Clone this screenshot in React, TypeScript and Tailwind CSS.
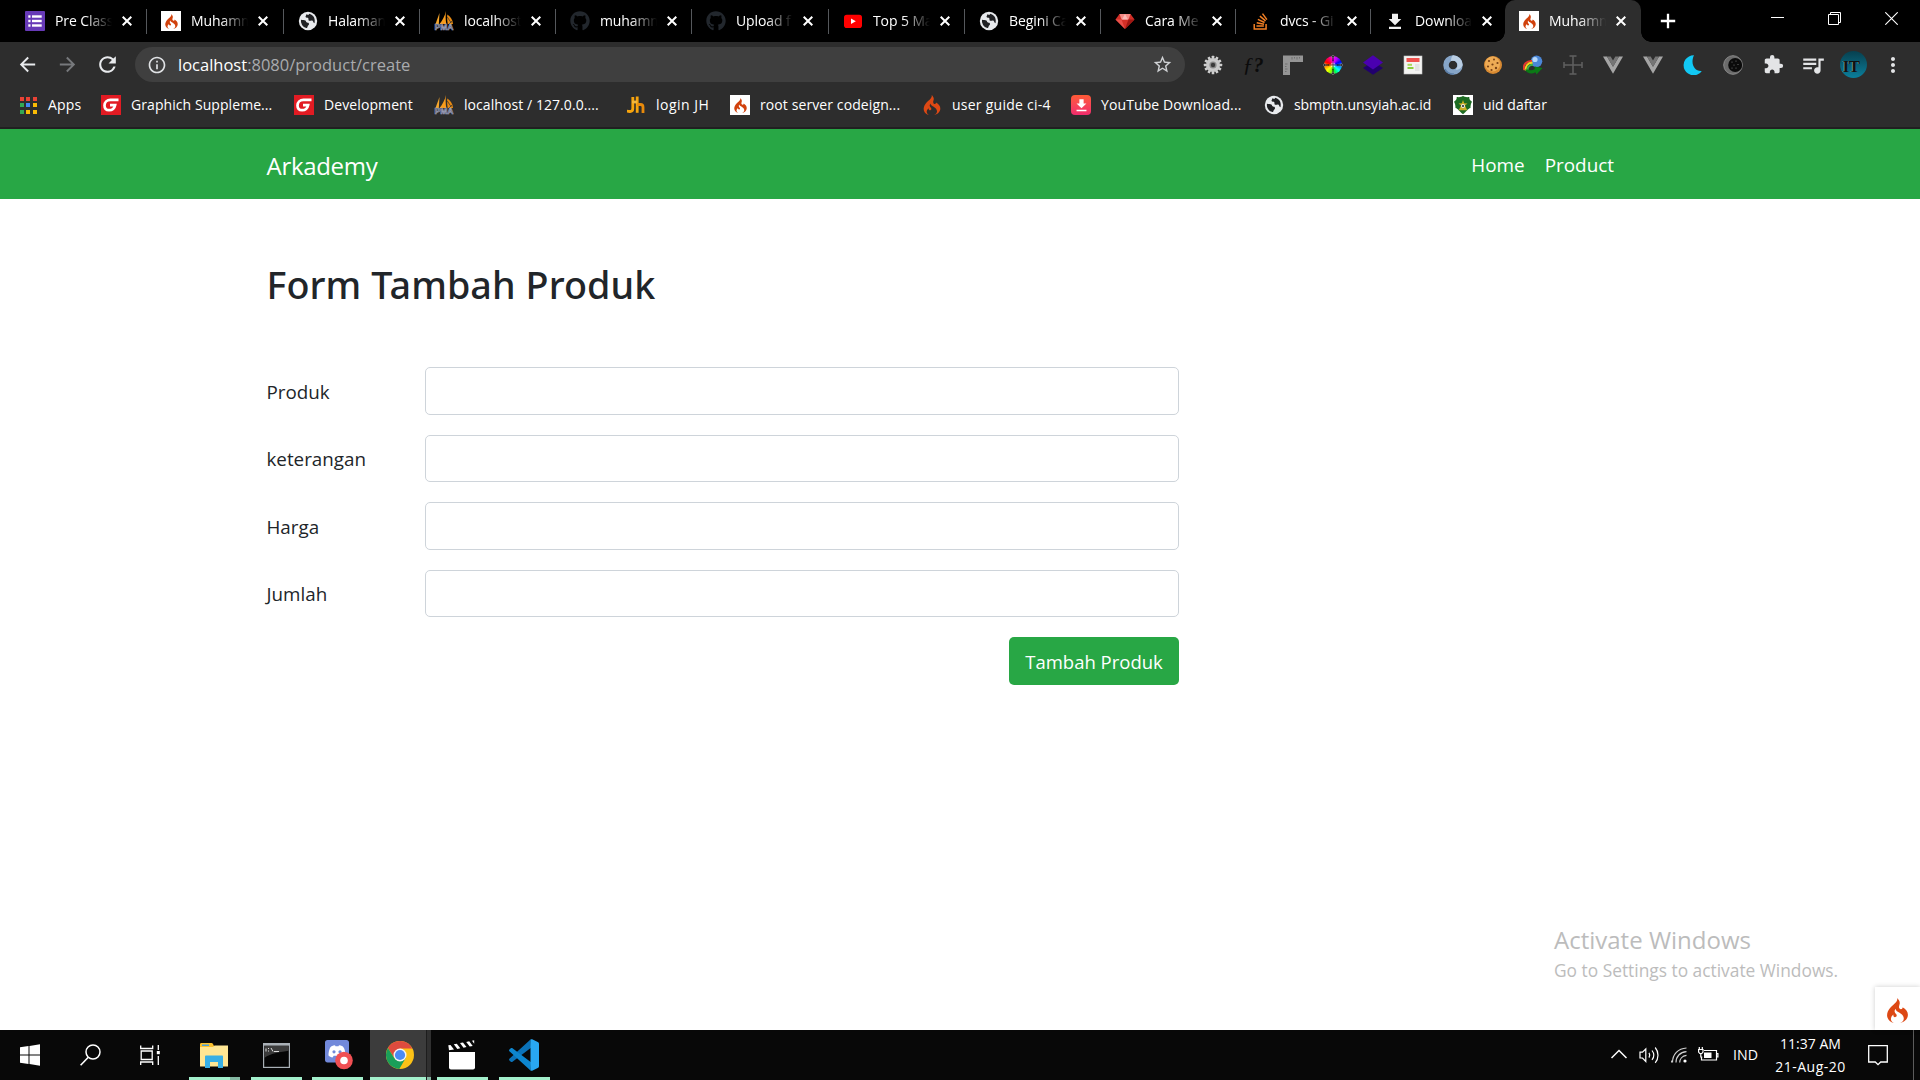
import type { ReactNode } from "react";
import { SiCodeigniter } from "react-icons/si";
import { FaGithub, FaStackOverflow } from "react-icons/fa";
import {
  MdArrowBack,
  MdArrowForward,
  MdRefresh,
  MdInfoOutline,
  MdStarBorder,
  MdExtension,
  MdQueueMusic,
  MdMoreVert,
  MdFileDownload,
} from "react-icons/md";

/* ---------- site icons ---------- */

const Flame = ({ className = "" }: { className?: string }) => <SiCodeigniter className={className} />;

const FlameTile = () => (
  <div className="flex size-5 items-center justify-center bg-white">
    <Flame className="size-[15px] text-[#d1410c]" />
  </div>
);

const FormsIcon = () => (
  <svg viewBox="0 0 20 20" className="size-5">
    <rect width="20" height="20" rx="1" fill="#673ab7" />
    <g fill="#fff">
      <rect x="3.3" y="4.3" width="2.2" height="2.4" />
      <rect x="3.3" y="8.8" width="2.2" height="2.4" />
      <rect x="3.3" y="13.3" width="2.2" height="2.4" />
      <rect x="7" y="4.3" width="9.7" height="2.4" />
      <rect x="7" y="8.8" width="9.7" height="2.4" />
      <rect x="7" y="13.3" width="9.7" height="2.4" />
    </g>
  </svg>
);

const GlobeIcon = () => (
  <svg viewBox="0 0 20 20" className="size-5">
    <circle cx="10" cy="10" r="9.2" fill="#e8eaed" />
    <path d="M3 8.800c1.600.5 3.400.2 4.400.8.9.7.4 1.700 1.500 1.900 1.200.2 2 .3 2.100 1.500.1 1.200-1.200 1.400-1.400 2.500-.1.900-.4 1.400-1.300 1.600A7.200 7.200 0 0 1 3 8.800Z" fill="#202124" />
    <path d="M8.300 3.300c.2 1.200-1 1.700-.7 2.700.4 1.200 2 .3 2.700 1.200.6.900-.4 2.200.8 2.500 1.700.4 2.300-.9 3.500.1 1 .8.500 2.200 1.900 2.500.8-3.300.2-8-5.200-9.500l-1 1.200Z" fill="#202124" />
  </svg>
);

const PmaIcon = () => (
  <svg viewBox="0 0 20 20" className="size-5">
    <path d="M5.500 2 1.500 13h3.300Z" fill="#f7a62b" />
    <path d="M12 0C10.800 5 8.500 9.500 5.500 13h6.800C11.500 9 11.500 4 12 0Z" fill="#f89c1c" />
    <path d="M13.300 3.500c-.4 4 0 7 .4 9.500h5.300c-.2-4-2.500-7.500-5.700-9.500Z" fill="#e98a12" />
    <path d="M13.300 6l4 6M15 13l3-3" stroke="#2c2c2c" strokeWidth=".7" />
    <text x="10" y="19.300" textAnchor="middle" fontFamily="Liberation Sans, sans-serif" fontWeight="700" fontSize="8.500" textLength="19" lengthAdjust="spacingAndGlyphs" fill="#30344e" stroke="#a9adc6" strokeWidth=".6">
      PMA
    </text>
  </svg>
);

const YoutubeIcon = () => (
  <svg viewBox="0 0 20 20" className="size-5">
    <rect x="1" y="3.700" width="18" height="13.300" rx="2.800" fill="#f00" />
    <path d="M8 7.500v5.600l4.800-2.800Z" fill="#fff" />
  </svg>
);

const RubyIcon = () => (
  <svg viewBox="0 0 20 20" className="size-5">
    <path d="M4.500 3h11l4 5.500L10 18 .5 8.500Z" fill="#d22f27" />
    <path d="M4.500 3h11l-2 5.500H6.500Z" fill="#f58a85" />
    <path d="M.5 8.500h6L10 18Z" fill="#e8504a" />
    <path d="M19.500 8.500h-6L10 18Z" fill="#9f1712" />
    <path d="M7 8.500 10 3l3 5.500Z" fill="#fbb9b5" />
  </svg>
);

const DownloadGlyph = () => (
  <svg viewBox="0 0 20 20" className="size-5">
    <path d="M7 2.800h6V8h3.300L10 14.200 3.700 8H7ZM4 15.700h12v2.300H4Z" fill="#f1f1f1" />
  </svg>
);

const appDots = [
  "bg-[#e94235]",
  "bg-[#e94235]",
  "bg-[#e94235]",
  "bg-[#34a853]",
  "bg-[#4286f5]",
  "bg-[#fabb05]",
  "bg-[#34a853]",
  "bg-[#fabb05]",
  "bg-[#fabb05]",
];

const AppsIcon = () => (
  <div className="grid grid-cols-3 gap-[2.500px]">
    {appDots.map((c, i) => (
      <div key={i} className={`size-1 ${c}`} />
    ))}
  </div>
);

const GIcon = () => (
  <svg viewBox="0 0 20 20" className="size-5">
    <rect width="20" height="20" fill="#e21b23" />
    <path d="M17.500 4.800H9.500C6 4.800 3.500 7.300 3.500 10.500c0 2.800 1.800 4.700 4.600 4.700 3.200 0 5.300-1.700 6-5H9" fill="none" stroke="#fff" strokeWidth="2.700" />
  </svg>
);

const JhIcon = () => (
  <svg viewBox="0 0 20 20" className="size-5">
    <g fill="none" strokeWidth="2.800">
      <path d="M6.800 2v11.500c0 2-1 3-2.600 3-1.200 0-2-.4-3.200-.4" stroke="#f7a40d" />
      <path d="M11.200 1.500V17.800" stroke="#f7a40d" />
      <path d="M11.200 9.500h3.300c1.700 0 2.500.8 2.500 2.400v6" stroke="#e88a0b" />
      <path d="M6 7h5" stroke="#f2b63d" />
    </g>
  </svg>
);

const DownloadTile = () => (
  <div className="flex size-5 items-center justify-center rounded-[4px] bg-gradient-to-b from-[#ff5a34] to-[#f02b6c]">
    <MdFileDownload className="size-[17px] text-white" />
  </div>
);

const UnsyiahIcon = () => (
  <svg viewBox="0 0 20 20" className="size-5">
    <rect width="20" height="20" fill="#fff" />
    <path d="M10 .8c1.500 1.600 4.500 1.400 6.300 1.200-.3 2 .9 3.600 2.700 4.800-1.300 2-1.400 3.800-1.500 6.200-2.800.7-4 3.600-7.500 6.200C6.500 16.600 5.300 13.700 2.500 13 2.400 10.600 2.300 8.800 1 6.800 2.800 5.600 4 4 3.700 2 5.500 2.200 8.500 2.400 10 .8Z" fill="#1d6b22" />
    <path d="M10 5l1.200 3.200 3.300.2-2.600 2 2.400 4.800H5.700l2.400-4.800-2.600-2 3.300-.2Z" fill="#c9ad25" />
    <circle cx="10" cy="11" r="2" fill="#eee" />
    <circle cx="10" cy="11" r="1" fill="#222" />
  </svg>
);

const Cross = () => (
  <svg viewBox="0 0 10 10" className="size-[10px]">
    <path d="M.7.7l8.600 8.600M9.300.7.7 9.300" stroke="#fff" strokeWidth="2" />
  </svg>
);

/* ---------- tab strip ---------- */

type TabProps = { icon: ReactNode; label: string; width: string; active?: boolean; last?: boolean };

const tabs: TabProps[] = [
  { icon: <FormsIcon />, label: "Pre Class", width: "w-[136px]" },
  { icon: <FlameTile />, label: "Muhamm", width: "w-[137px]" },
  { icon: <GlobeIcon />, label: "Halaman", width: "w-[136px]" },
  { icon: <PmaIcon />, label: "localhost", width: "w-[136px]" },
  { icon: <FaGithub className="size-5 text-[#22272d]" />, label: "muhamm", width: "w-[136px]" },
  { icon: <FaGithub className="size-5 text-[#22272d]" />, label: "Upload f", width: "w-[137px]" },
  { icon: <YoutubeIcon />, label: "Top 5 Ma", width: "w-[136px]" },
  { icon: <GlobeIcon />, label: "Begini Ca", width: "w-[136px]" },
  { icon: <RubyIcon />, label: "Cara Me", width: "w-[135px]" },
  { icon: <FaStackOverflow className="size-[19px] text-[#f48024]" />, label: "dvcs - Gi", width: "w-[135px]" },
  { icon: <DownloadGlyph />, label: "Downloa", width: "w-[134px]", last: true },
  { icon: <FlameTile />, label: "Muhamm", width: "w-[136px]", active: true },
];

const Tab = ({ icon, label, width, active, last }: TabProps) => (
  <div className={`relative flex h-full shrink-0 items-center pl-[14px] ${width} ${active ? "rounded-t-[10px] bg-[#2d2d2d]" : ""}`}>
    {active && (
      <>
        <div className="absolute bottom-0 -left-[10px] size-[10px] bg-[radial-gradient(circle_at_0_0,transparent_9.500px,#2d2d2d_10px)]" />
        <div className="absolute -right-[10px] bottom-0 size-[10px] bg-[radial-gradient(circle_at_100%_0,transparent_9.500px,#2d2d2d_10px)]" />
      </>
    )}
    <div className="flex size-5 items-center justify-center">{icon}</div>
    <div className="ml-[10px] w-[58px] overflow-hidden text-[14px] leading-5 tracking-[-0.100px] whitespace-nowrap text-white [mask-image:linear-gradient(to_right,#000_30px,transparent_57px)]">
      {label}
    </div>
    <div className="ml-[9px]">
      <Cross />
    </div>
    {!active && !last && <div className="ml-auto h-[25px] w-px bg-[#55585c]" />}
  </div>
);

const TabStrip = () => (
  <div className="flex h-[42px] items-center bg-black pl-[11px]">
    {tabs.map((t, i) => (
      <Tab key={i} {...t} />
    ))}
    <svg viewBox="0 0 16 16" className="ml-[19px] size-4">
      <path d="M8 .8v14.400M.8 8h14.400" stroke="#fff" strokeWidth="2.300" />
    </svg>
    <div className="ml-auto flex h-full items-start gap-[44px] pt-3 pr-[22px]">
      <svg viewBox="0 0 13 13" className="size-[13px]">
        <path d="M0 5.500h13" stroke="#fff" />
      </svg>
      <svg viewBox="0 0 13 13" className="size-[13px]">
        <path d="M.5 2.500h10v10h-10ZM2.500 2.500v-2h10v10h-2" fill="none" stroke="#fff" />
      </svg>
      <svg viewBox="0 0 13 13" className="size-[13px]">
        <path d="M.3.3l12.400 12.400M12.700.3.3 12.700" stroke="#fff" strokeWidth="1.100" />
      </svg>
    </div>
  </div>
);

/* ---------- extension icons ---------- */

const gearTeeth = Array.from({ length: 12 }, (_, i) => i * 30);

const GearIcon = () => (
  <svg viewBox="0 0 20 20" className="size-5">
    {gearTeeth.map((a) => (
      <rect key={a} x="8.700" y=".8" width="2.600" height="4" rx=".5" fill="#cfcfcf" transform={`rotate(${a} 10 10)`} />
    ))}
    <circle cx="10" cy="10" r="7" fill="#c9c9c9" />
    <circle cx="10" cy="10" r="3.600" fill="#8a8a8a" />
    <circle cx="10" cy="10" r="2.200" fill="#3a3a3a" />
  </svg>
);

const RulerIcon = () => (
  <svg viewBox="0 0 20 20" className="size-5">
    <path d="M0 .5h20v6.500H7V20H0Z" fill="#959595" />
    <path d="M9 2v2.500M11.500 2v1.500M14 2v2.500M16.500 2v1.500M2 9h2.500M2 11.500h1.500M2 14h2.500M2 16.500h1.500" stroke="#6b6b6b" strokeWidth=".9" />
  </svg>
);

const ColorWheel = () => (
  <div className="relative flex size-5 items-center justify-center">
    <div className="size-[18px] rounded-full bg-[conic-gradient(#f0f,#b000ff,#00f,#08f,#0ff,#0f4,#8f0,#ff0,#f80,#f00,#f06,#f0f)]" />
    <svg viewBox="0 0 20 20" className="absolute inset-0 size-5">
      <circle cx="10" cy="10" r="2.500" fill="#fff" opacity=".5" />
      <path d="M10 5v10M5 10h10" stroke="#222" strokeWidth=".6" />
      <g fill="#111" stroke="#bbb" strokeWidth=".5">
        <circle cx="10" cy="1.800" r="1.300" />
        <circle cx="10" cy="18.200" r="1.300" />
        <circle cx="1.800" cy="10" r="1.300" />
        <circle cx="18.200" cy="10" r="1.300" />
      </g>
      <path d="M10 3v3M10 14v3M3 10h3M14 10h3" stroke="#111" strokeWidth="1" />
    </svg>
  </div>
);

const LayersIcon = () => (
  <svg viewBox="0 0 20 20" className="size-5">
    <path d="M0 13 10 6.500 20 13 10 19.800Z" fill="#21006e" />
    <path d="M0 7.500 10 .3 20 7.500 10 14.500Z" fill="#4a00b0" />
  </svg>
);

const PageIcon = () => (
  <svg viewBox="0 0 20 20" className="size-5">
    <rect x="1" y="1" width="18" height="18" fill="#f4f4f2" stroke="#c5c5c5" strokeWidth=".6" />
    <rect x="3.500" y="3" width="13" height="4" fill="#f0524f" />
    <rect x="4.500" y="8.800" width="4.500" height="2" fill="#a9d65c" />
    <rect x="4.500" y="12" width="6" height="2" fill="#8ccf3c" />
    <path d="M12 9h4.500v7H12Z" fill="#e4e4e4" />
  </svg>
);

const SwirlIcon = () => (
  <svg viewBox="0 0 20 20" className="size-5">
    <circle cx="10" cy="10" r="7" fill="none" stroke="#86a5c8" strokeWidth="5.500" />
    <path d="M10 .3A9.700 9.700 0 0 1 19.700 10c-1 3-4 5.500-7 4.500A5 5 0 0 0 14.500 10C14.500 6 11 5 8 6 8 4 8.500 1.500 10 .3Z" fill="#b9cde2" />
    <path d="M2 14c1 3 5 5.500 9 5" fill="none" stroke="#5c7fa9" strokeWidth="1.500" />
  </svg>
);

const CookieIcon = () => (
  <svg viewBox="0 0 20 20" className="size-5">
    <circle cx="10" cy="10" r="9" fill="#d88a32" />
    <circle cx="9.500" cy="9" r="7.500" fill="#eeab55" />
    <g fill="#7a4215">
      <circle cx="6" cy="6" r="1.100" />
      <circle cx="11" cy="4.500" r="1" />
      <circle cx="14.500" cy="8" r="1.100" />
      <circle cx="9.500" cy="9.500" r="1.100" />
      <circle cx="5" cy="11.500" r="1.100" />
      <circle cx="13" cy="13" r="1.200" />
      <circle cx="8.500" cy="15" r="1.100" />
    </g>
  </svg>
);

const IdmIcon = () => (
  <svg viewBox="0 0 20 20" className="size-5">
    <circle cx="13.500" cy="6.300" r="5.800" fill="#4b87d8" />
    <circle cx="12" cy="4.500" r="2.600" fill="#b7d8fa" />
    <g fill="none" strokeWidth="2">
      <path d="M1.200 15C-.5 9.500 4 5.500 9 6" stroke="#e5372d" />
      <path d="M2.800 15.500C2 11 5 7.500 9.500 7.900" stroke="#f7d21e" />
      <path d="M4.600 15.500C4 12.500 6.500 9.500 10 9.700" stroke="#41b549" />
    </g>
    <path d="M2 14.500c2 4.500 7 5 10.500 2.800l1 2.200 6-6.500-8-1.500.3 2.500c-2.500 1.500-5 1.500-7 .5Z" fill="#0b7a16" />
  </svg>
);

const CrossArms = () => (
  <svg viewBox="0 0 20 20" className="size-5">
    <path d="M10 1v18M.8 10h18.400M6.500 1h7M6.500 19h7M1 7v6M19 7v6" fill="none" stroke="#606060" strokeWidth="1.500" />
  </svg>
);

const VueIcon = () => (
  <svg viewBox="0 0 20 20" className="size-5">
    <path d="M0 1.500h4l6 10.300 6-10.300h4L10 18.800Z" fill="#a5a5a5" />
    <path d="M4 1.500h3.700L10 5.400l2.300-3.900H16L10 11.800Z" fill="#757575" />
  </svg>
);

const MoonIcon = () => (
  <svg viewBox="0 0 20 20" className="size-5">
    <path d="M11 .3a10 10 0 1 0 7.800 15.700C11.500 16.800 7 8.500 11 .3Z" fill="#12c8f4" />
  </svg>
);

const DarkMoonIcon = () => (
  <svg viewBox="0 0 20 20" className="size-5">
    <circle cx="10" cy="10" r="9.300" fill="#6b6b6b" stroke="#8a8a8a" />
    <circle cx="12.200" cy="10" r="7" fill="#0b0b0b" />
    <g fill="#777">
      <circle cx="9" cy="7" r=".6" />
      <circle cx="13" cy="6" r=".6" />
      <circle cx="11" cy="10" r=".6" />
      <circle cx="15" cy="9.500" r=".6" />
      <circle cx="13" cy="13" r=".6" />
      <circle cx="9" cy="13" r=".6" />
    </g>
  </svg>
);

const extensions: ReactNode[] = [
  <GearIcon />,
  <span className="font-['Liberation_Serif',serif] text-[22px] leading-5 font-bold text-[#0b0b0b]">
    <i className="font-normal">ƒ</i>
    <i className="text-[20px]">?</i>
  </span>,
  <RulerIcon />,
  <ColorWheel />,
  <LayersIcon />,
  <PageIcon />,
  <SwirlIcon />,
  <CookieIcon />,
  <IdmIcon />,
  <CrossArms />,
  <VueIcon />,
  <VueIcon />,
  <MoonIcon />,
  <DarkMoonIcon />,
  <MdExtension className="size-[21px] text-[#e3e4e6]" />,
  <MdQueueMusic className="size-[26px] text-[#e3e4e6]" />,
  <div className="flex size-[27px] items-center overflow-hidden rounded-full bg-gradient-to-b from-[#07404f] to-[#0a7f9c] pt-1 pl-[3px] font-['Liberation_Serif',serif] text-[17px] leading-none font-bold tracking-[-0.500px] text-[#111] [text-shadow:-1px_0_0_#6d98a3]">
    IT
  </div>,
  <MdMoreVert className="size-6 text-[#e3e4e6]" />,
];

const Toolbar = () => (
  <div className="flex h-[45px] items-center">
    <div className="flex w-[135px] items-center pl-[16px]">
      <MdArrowBack className="size-[23px] text-[#e8eaed]" />
      <MdArrowForward className="ml-[17px] size-[23px] text-[#77797c]" />
      <MdRefresh className="ml-[16px] size-[25px] text-[#e8eaed]" />
    </div>
    <div className="flex h-[35px] w-[1050px] items-center rounded-full bg-[#3f3f3f] pr-[12px] pl-[12px]">
      <MdInfoOutline className="size-5 text-[#e0e2e5]" />
      <span className="ml-[11px] text-[16.500px] leading-6 text-[#a9abae]">
        <span className="text-white">localhost</span>:8080/product/create
      </span>
      <MdStarBorder className="ml-auto size-[21px] text-[#d0d2d5]" />
    </div>
    <div className="ml-[8px] flex">
      {extensions.map((e, i) => (
        <div key={i} className="flex h-[30px] w-10 items-center justify-center">
          {e}
        </div>
      ))}
    </div>
  </div>
);

/* ---------- bookmarks ---------- */

const bookmarks: { icon: ReactNode; label: string; width: string; tracking?: string }[] = [
  { icon: <AppsIcon />, label: "Apps", width: "w-[83px]", tracking: "tracking-[0.200px]" },
  { icon: <GIcon />, label: "Graphich Suppleme...", width: "w-[193px]", tracking: "tracking-[0.070px]" },
  { icon: <GIcon />, label: "Development", width: "w-[140px]", tracking: "tracking-[0.100px]" },
  { icon: <PmaIcon />, label: "localhost / 127.0.0....", width: "w-[192px]", tracking: "tracking-[0.070px]" },
  { icon: <JhIcon />, label: "login JH", width: "w-[104px]", tracking: "tracking-[0.500px]" },
  { icon: <FlameTile />, label: "root server codeign...", width: "w-[192px]", tracking: "tracking-[0.100px]" },
  { icon: <Flame className="size-5 text-[#dd4814]" />, label: "user guide ci-4", width: "w-[149px]", tracking: "tracking-[0.250px]" },
  { icon: <DownloadTile />, label: "YouTube Download...", width: "w-[193px]", tracking: "tracking-[0.100px]" },
  { icon: <GlobeIcon />, label: "sbmptn.unsyiah.ac.id", width: "w-[189px]", tracking: "tracking-[-0.080px]" },
  { icon: <UnsyiahIcon />, label: "uid daftar", width: "w-[120px]" },
];

const Bookmarks = () => (
  <div className="flex h-[40px] items-center pb-[4px] pl-[18px]">
    {bookmarks.map((b) => (
      <div key={b.label} className={`flex shrink-0 items-center ${b.width}`}>
        <div className="flex size-5 items-center justify-center">{b.icon}</div>
        <span className={`ml-[10px] text-[14px] leading-5 whitespace-nowrap text-white ${b.tracking ?? ""}`}>{b.label}</span>
      </div>
    ))}
  </div>
);

/* ---------- web page ---------- */

const fields = ["Produk", "keterangan", "Harga", "Jumlah"];

const Page = () => (
  <main className="relative h-[901px] bg-white text-[#212529]">
    <nav className="flex h-[70px] items-center bg-[#28a745] pr-[306px] pl-[266.500px] text-white">
      <span className="mt-1 text-[24px] leading-9 tracking-[-0.300px]">Arkademy</span>
      <div className="mt-[2px] ml-auto flex gap-5 text-[18.900px] leading-[30px]">
        <span>Home</span>
        <span>Product</span>
      </div>
    </nav>
    <div className="w-[1179px] pl-[266.500px]">
      <h1 className="pt-[62px] font-['Noto_Sans',sans-serif] text-[37.700px] leading-[48px] font-medium tracking-[0.080px]">
        Form Tambah Produk
      </h1>
      <form className="mt-[58px] flex flex-col gap-5">
        {fields.map((f) => (
          <div key={f} className="flex h-[47.500px] items-center">
            <label className="w-[158.500px] pt-[2px] text-[18.800px] leading-[30px]">{f}</label>
            <input className="h-full flex-1 rounded-[5px] border border-[#ced4da] bg-white" />
          </div>
        ))}
        <button type="button" className="h-[47.500px] w-[170px] self-end rounded-[5px] bg-[#28a745] pt-[2px] text-[18.500px] text-white">
          Tambah Produk
        </button>
      </form>
    </div>
    <div className="absolute top-[794px] left-[1554px] text-[#bcbcbc]">
      <div className="text-[24px] leading-[34px]">Activate Windows</div>
      <div className="text-[17.350px] leading-[26px]">Go to Settings to activate Windows.</div>
    </div>
    <div className="absolute right-0 bottom-0 flex h-[43px] w-[45px] items-center justify-center bg-white pt-[3px] shadow-[0_0_5px_rgba(0,0,0,0.2)]">
      <Flame className="size-[25px] text-[#dd4814]" />
    </div>
  </main>
);

/* ---------- taskbar ---------- */

const WindowsLogo = () => (
  <svg viewBox="0 0 20 22" className="h-[22px] w-5">
    <path d="M0 3.200 8.500 2v8.500H0ZM9.500 1.900 20 .3v10.200H9.500ZM0 11.500h8.500V20L0 18.800ZM9.500 11.500H20v10.200L9.500 20.100Z" fill="#fff" />
  </svg>
);

const SearchIcon = () => (
  <svg viewBox="0 0 21 22" className="h-[22px] w-[21px]">
    <circle cx="13" cy="8" r="7" fill="none" stroke="#fff" strokeWidth="1.500" />
    <path d="M8.300 13.300.6 21.300" stroke="#fff" strokeWidth="1.600" />
  </svg>
);

const TaskViewIcon = () => (
  <svg viewBox="0 0 20 20" className="size-5">
    <path d="M.7.500v3h12v-3M1.200 6h11v8.500h-11ZM.7 20v-3h12v3M18.300 0v5M18.300 11v9" fill="none" stroke="#fff" strokeWidth="1.300" />
    <rect x="16.800" y="6" width="3" height="3.200" fill="#fff" />
  </svg>
);

const ExplorerIcon = () => (
  <svg viewBox="0 0 28 25" className="h-[25px] w-7">
    <path d="M0 1.500C0 .7.500 0 1.200 0h10.300c.7 0 1.200.4 1.500 1l1 2H28v19.500H0Z" fill="#fbc02d" />
    <path d="M0 4h13l1.500-1.500H28v21H0Z" fill="#ffe693" />
    <rect x="2" y="1.500" width="7" height="1.500" fill="#4ba0d8" />
    <path d="M5 25V13.500C5 13 5.500 12.500 6 12.500h16c.6 0 1 .5 1 1V25h-5v-6h-8v6Z" fill="#38afe5" />
  </svg>
);

const CmdIcon = () => (
  <svg viewBox="0 0 27 25" className="h-[25px] w-[27px]">
    <rect width="27" height="25" fill="#a9b0b6" />
    <rect x="1.200" y="2.800" width="24.600" height="21" fill="#050505" />
    <path d="M1.200 2.800h24.600v5C18 9 8 10 1.200 15Z" fill="#3b3b3b" />
    <path d="M3 5.500v3M5 5.500h1M5 8h1M8 5l2 3.500M11 8.500h5" stroke="#ddd" strokeWidth="1" />
  </svg>
);

const DiscordIcon = () => (
  <svg viewBox="0 0 28 30" className="h-[30px] w-7">
    <path d="M2.500 0h19C23 0 24 1 24 2.500V25l-5-2.500H2.500C1 22.500 0 21.500 0 20V2.500C0 1 1 0 2.500 0Z" fill="#7289da" />
    <path d="M3.500 15.500C3.500 11 5 7 6.500 6.300c1.300-.6 2.500-.9 3.500-1l.5 1h3l.5-1c1.200.1 2.300.4 3.500 1 1.500.8 3 4.700 3 9.200-1 1.200-2.500 1.800-4 2l-1.200-1.700h-6.600L7.500 17.500c-1.500-.2-3-.8-4-2Z" fill="#fff" />
    <circle cx="9" cy="11.800" r="1.600" fill="#7289da" />
    <circle cx="15" cy="11.800" r="1.600" fill="#7289da" />
    <circle cx="19" cy="20.500" r="8.800" fill="#f04f53" />
    <circle cx="19" cy="20.500" r="3.800" fill="#fff" />
  </svg>
);

const ChromeIcon = () => (
  <svg viewBox="0 0 28 28" className="size-[28px]">
    <circle cx="14" cy="14" r="14" fill="#fbc116" />
    <path d="M14 7.500h12.400A14 14 0 0 0 1.880 7l6.500 10Z" fill="#dd4b3e" />
    <path d="M1.880 7A14 14 0 0 0 13.300 28L19.600 17.200 8.400 17.200Z" fill="#1a9f59" />
    <circle cx="14" cy="14" r="6.500" fill="#f4f4f4" />
    <circle cx="14" cy="14" r="5.100" fill="#4a8af4" />
  </svg>
);

const ClapperIcon = () => (
  <svg viewBox="0 0 27 30" className="h-[30px] w-[27px]">
    <path d="M1 12h26v15.500a2 2 0 0 1-2 2H3a2 2 0 0 1-2-2Z" fill="#fff" />
    <path d="M.3 5.300 2.500 5l3.500 4.500-5 .8ZM5.800 4.300l3-.6 3.500 4.600-3 .6ZM12 3.100l3-.6 3.500 4.600-3 .6ZM18.200 1.900l3-.6L24.700 5.900l-3 .6ZM24 .7 26.200.3v3.500Z" fill="#fff" />
  </svg>
);

const VsCodeIcon = () => (
  <svg viewBox="0 0 30 32" className="h-8 w-[30px]">
    <path d="M22 8.700 3.500 22.700c-.6.500-1.200.4-1.700 0L.4 21.400c-.5-.5-.5-1.100 0-1.600L21.500.6Z" fill="#0b72b8" />
    <path d="M22 23.300 3.500 9.300c-.6-.5-1.200-.4-1.700 0L.4 10.600c-.5.5-.5 1.100 0 1.600l21.100 19.200Z" fill="#0d86cf" />
    <path d="M21.500.5c.8-.5 1.500-.4 2.200 0l5 2.500c.8.400 1.300 1 1.300 2v22c0 1-.5 1.600-1.300 2l-5 2.500c-.7.400-1.500.5-2.200 0Z" fill="#29a7f2" />
  </svg>
);

const TrayIcon = ({ children, w, className = "" }: { children: ReactNode; w: number; className?: string }) => (
  <svg width={w} height="20" viewBox={`0 0 ${w} 20`} fill="none" stroke="#fff" strokeWidth="1.200" className={className}>
    {children}
  </svg>
);

const AppSlot = ({ icon, width, bar }: { icon: ReactNode; width: string; bar?: ReactNode }) => (
  <div className={`flex h-full flex-col items-center ${width}`}>
    <div className="flex flex-1 items-center justify-center pt-[3px]">{icon}</div>
    <div className="flex h-[3px]">{bar}</div>
  </div>
);

const greenBar = <div className="w-[51px] bg-[#a3f0cc]" />;

const groupedBar = (
  <>
    <div className="w-[41px] bg-[#a3f0cc]" />
    <div className="w-[10px] bg-[#85b9a3]" />
  </>
);

const Taskbar = () => (
  <footer className="flex h-[50px] items-center bg-[#080808] text-white">
    <AppSlot icon={<WindowsLogo />} width="w-[60px]" />
    <AppSlot icon={<SearchIcon />} width="w-[60px]" />
    <AppSlot icon={<TaskViewIcon />} width="w-[60px]" />
    <AppSlot icon={<ExplorerIcon />} bar={groupedBar} width="w-[68px]" />
    <AppSlot icon={<CmdIcon />} bar={greenBar} width="w-[56px]" />
    <AppSlot icon={<div className="pl-1"><DiscordIcon /></div>} bar={greenBar} width="w-[66px]" />
    <div className="flex h-full w-[61px]">
      <div className="flex w-[56px] flex-col items-center bg-[#3c3c3c]">
        <div className="flex flex-1 items-center pt-[3px] pl-[3px]">
          <ChromeIcon />
        </div>
        <div className="h-[3px] w-full bg-[#a3f0cc]" />
      </div>
      <div className="flex w-[5px] flex-col justify-end border-l border-[#1d1d1d] bg-[#303030]">
        <div className="h-[3px] bg-[#85b9a3]" />
      </div>
    </div>
    <AppSlot icon={<div className="pr-[2px]"><ClapperIcon /></div>} bar={greenBar} width="w-[63px]" />
    <AppSlot icon={<div className="pr-[2px]"><VsCodeIcon /></div>} bar={greenBar} width="w-[61px]" />

    <div className="ml-auto flex h-full items-center">
      <TrayIcon w={16}>
        <path d="M.5 13 8 5.500l7.500 7.500" strokeWidth="1.500" />
      </TrayIcon>
      <TrayIcon w={21} className="ml-[12px]">
        <path d="M1 7.200h2.500L6.800 4v12.500L3.500 13H1Z" />
        <path d="M10 7.800c1 1.500 1 3.400 0 4.900M13 5.500c2.200 2.800 2.200 6.600 0 9.400M16.200 2.500c3.700 4.400 3.700 11 0 15.400" />
      </TrayIcon>
      <TrayIcon w={17} className="ml-[11px]">
        <path d="M1.500 17.500C1.500 9.500 7 3.500 15.500 3M5 17.500c0-6 4-10.300 10.500-10.800M8.700 17.500c0-3.500 2.500-6.700 6.800-7.200M.8 15.500l-.3 2" stroke="#d0d0d0" />
        <circle cx="14" cy="16" r="1.600" fill="#fff" stroke="none" />
      </TrayIcon>
      <TrayIcon w={21} className="ml-[10px]">
        <path d="M6 5.500h12.500v9.500H3.500v-3M18.500 8.500h1.400v3.500h-1.400" />
        <rect x="6" y="7.500" width="7.500" height="5.500" fill="#fff" stroke="none" />
        <path d="M1.300 2v2M4.300 2v2M.6 4.500H5V7L3.800 8.500h-2L.6 7ZM2.800 8.500V12h1.500" />
      </TrayIcon>
      <span className="ml-[14px] text-[14.200px] leading-5">IND</span>
      <div className="ml-[17px] flex w-[71px] flex-col items-center text-[14px] leading-[23px] whitespace-nowrap">
        <span>11:37 AM</span>
        <span className="tracking-[0.500px]">21-Aug-20</span>
      </div>
      <svg viewBox="0 0 20 21" className="ml-[22px] h-[21px] w-5">
        <path d="M.7.7h18.600v16.300h-6.600L10 19.700 7.300 17H.7Z" fill="none" stroke="#fff" strokeWidth="1.300" />
      </svg>
      <div className="ml-[25px] h-full w-px bg-[#5b5b5b]" />
      <div className="w-[6px]" />
    </div>
  </footer>
);

export default function App() {
  return (
    <div className="h-[1080px] w-[1920px] overflow-hidden font-['Open_Sans',sans-serif]">
      <header className="h-[129px] border-b-2 border-[#202020] bg-[#2d2d2d]">
        <TabStrip />
        <Toolbar />
        <Bookmarks />
      </header>
      <Page />
      <Taskbar />
    </div>
  );
}
